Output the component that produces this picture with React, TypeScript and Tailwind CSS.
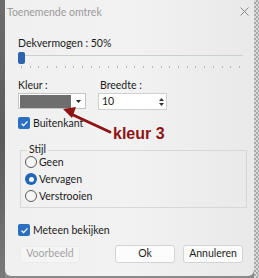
import React from "react";

function Check() {
  return (
    <div className="w-[12px] h-[12px] rounded-[2px] bg-[#2a6fc0] flex items-center justify-center">
      <svg width="9" height="9" viewBox="0 0 10 10">
        <path d="M1.8 5.2 L4 7.3 L8.3 2.6" fill="none" stroke="white" strokeWidth="1.4" />
      </svg>
    </div>
  );
}

function Radio({ on }: { on?: boolean }) {
  return on ? (
    <div className="w-[12px] h-[12px] rounded-full bg-[#1f65b8] flex items-center justify-center">
      <div className="w-[5px] h-[5px] rounded-full bg-white" />
    </div>
  ) : (
    <div className="w-[12px] h-[12px] rounded-full border border-[#5a5a5a] bg-[#f6f6f6]" />
  );
}

export default function App() {
  const ticks = Array.from({ length: 26 });
  return (
    <div
      className="relative w-[259px] h-[278px] overflow-hidden flex bg-[#8a8a8a]"
      style={{ fontFamily: 'Lato, "Noto Sans", sans-serif' }}
    >
      {/* left background strip */}
      <div className="w-[5px] h-full bg-gradient-to-b from-[#6d6d6d] via-[#5a5a5a] to-[#7a7a7a]" />
      {/* dialog */}
      <div className="relative w-[249px] h-[276px] bg-gradient-to-r from-[#f0f0f0] via-[#f2f2f2] to-[#e9e9e9] rounded-b-[6px] flex flex-col text-[#1b1b1b]">
        {/* title bar */}
        <div className="h-[24px] flex items-center justify-between pl-[2px] pr-[5px]">
          <span className="text-[10.5px] text-[#9a9a9a] leading-none">Toenemende omtrek</span>
          <svg width="9" height="9" viewBox="0 0 9 9" className="mt-[-2px]">
            <path d="M0.5 0.5 L8.5 8.5 M8.5 0.5 L0.5 8.5" stroke="#8a8a8a" strokeWidth="1" />
          </svg>
        </div>
        <div className="pl-[13px] pr-[6px] flex flex-col">
          <div className="mt-[12px] text-[10.5px] leading-[14px]">Dekvermogen : 50%</div>
          {/* slider */}
          <div className="relative mt-[2px] h-[16px] w-[225px]">
            <div className="absolute left-0 right-0 top-[3px] h-[1px] bg-[#c8d0d0]" />
            <div className="absolute left-[0px] top-[0px] w-[7px] h-[12px] rounded-[2px] bg-[#2b63b0]" />
            <div className="absolute left-[3px] right-[3px] top-[14px] flex justify-between">
              {ticks.map((_, i) => (
                <div key={i} className="w-[1px] h-[2px] bg-[#b5b5b5]" />
              ))}
            </div>
          </div>
          {/* Kleur / Breedte */}
          <div className="mt-[10px] flex">
            <div className="flex flex-col w-[80px]">
              <span className="text-[10.5px] leading-[14px]">Kleur :</span>
              <div className="mt-[1px] w-[68px] h-[16px] border border-[#c4c4c4] bg-white flex items-center pl-[1px]">
                <div className="w-[51px] h-[13px] bg-[#6e6e6e]" />
                <div className="flex-1 flex justify-center">
                  <svg width="5" height="3" viewBox="0 0 5 3">
                    <path d="M0 0 L5 0 L2.5 3 Z" fill="#222" />
                  </svg>
                </div>
              </div>
            </div>
            <div className="flex flex-col">
              <span className="text-[10.5px] leading-[14px] pl-[2px]">Breedte :</span>
              <div className="mt-[1px] w-[69px] h-[17px] border border-[#cfcfcf] bg-white flex items-center justify-between pl-[3px] pr-[2px]">
                <span className="text-[10.5px] leading-none">10</span>
                <div className="flex flex-col gap-[2px] items-center">
                  <svg width="5" height="3" viewBox="0 0 5 3"><path d="M0 3 L5 3 L2.5 0 Z" fill="#333" /></svg>
                  <svg width="5" height="3" viewBox="0 0 5 3"><path d="M0 0 L5 0 L2.5 3 Z" fill="#333" /></svg>
                </div>
              </div>
            </div>
          </div>
          {/* Buitenkant */}
          <div className="mt-[6px] flex items-center gap-[3px]">
            <Check />
            <span className="text-[10.5px] leading-[14px]">Buitenkant</span>
          </div>
          {/* Stijl group */}
          <div className="relative mt-[20px] ml-[2px] w-[227px] h-[58px] border border-[#d7d7d7] flex flex-col pl-[4px] pt-[5px] gap-[5px]">
            <span className="absolute left-[6px] top-[-9px] px-[2px] bg-[#f0f0f0] text-[10.5px] leading-[14px]">Stijl</span>
            <div className="flex items-center gap-[2px]">
              <Radio />
              <span className="text-[10.5px] leading-[12px]">Geen</span>
            </div>
            <div className="flex items-center gap-[2px]">
              <Radio on />
              <span className="text-[10.5px] leading-[12px]">Vervagen</span>
            </div>
            <div className="flex items-center gap-[2px]">
              <Radio />
              <span className="text-[10.5px] leading-[12px]">Verstrooien</span>
            </div>
          </div>
          {/* Meteen bekijken */}
          <div className="mt-[15px] flex items-center gap-[3px]">
            <Check />
            <span className="text-[10.5px] leading-[14px]">Meteen bekijken</span>
          </div>
          {/* buttons */}
          <div className="mt-[8px] flex items-center">
            <div className="ml-[2px] w-[60px] h-[17px] rounded-[3px] bg-[#f5f5f5] border border-[#ececec] flex items-center justify-center text-[10.5px] text-[#a3a3a3]">
              Voorbeeld
            </div>
            <div className="ml-[35px] w-[60px] h-[18px] rounded-[3px] bg-[#fcfcfc] border border-[#d3d3d3] flex items-center justify-center text-[10.5px]">
              Ok
            </div>
            <div className="ml-[8px] w-[60px] h-[18px] rounded-[3px] bg-[#fcfcfc] border border-[#d3d3d3] flex items-center justify-center text-[10.5px]">
              Annuleren
            </div>
          </div>
        </div>
        {/* annotation arrow + text */}
        <svg className="absolute left-0 top-0" width="249" height="276" viewBox="0 0 249 276">
          <path d="M105 132 L66 114" stroke="#8e1313" strokeWidth="2.8" strokeLinecap="round" />
          <path d="M58 109 L71 107 L67 118 Z" fill="#8e1313" />
        </svg>
        <span
          className="absolute left-[108px] top-[126px] text-[16px] font-bold leading-none text-[#8e1313]"
          style={{ fontFamily: '"Liberation Sans", Arial, sans-serif' }}
        >
          kleur 3
        </span>
      </div>
      {/* right checkered strip */}
      <div
        className="flex-1 h-full"
        style={{
          backgroundColor: "#d8d8d8",
          backgroundImage:
            "linear-gradient(45deg,#a9a9a9 25%,transparent 25%,transparent 75%,#a9a9a9 75%),linear-gradient(45deg,#a9a9a9 25%,transparent 25%,transparent 75%,#a9a9a9 75%)",
          backgroundSize: "4px 4px",
          backgroundPosition: "0 0,2px 2px",
        }}
      />
    </div>
  );
}
